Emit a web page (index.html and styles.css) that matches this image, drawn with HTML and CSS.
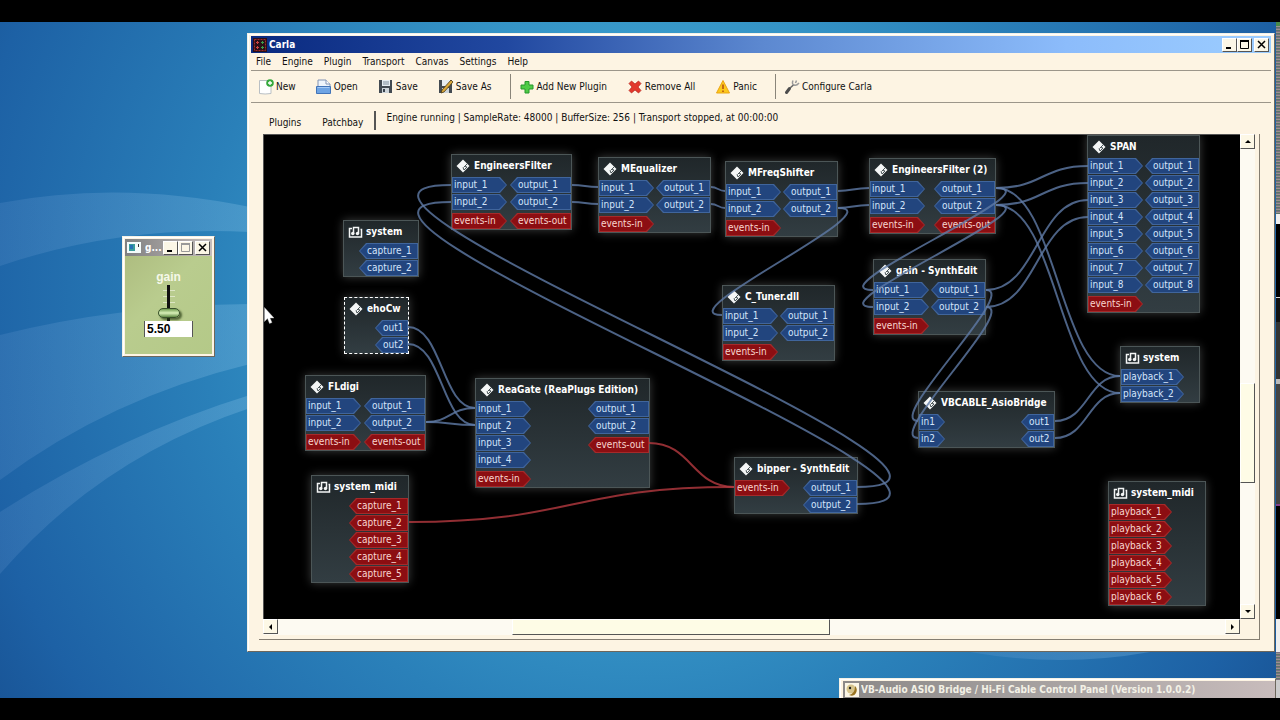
FILE: index.html
```html
<!DOCTYPE html>
<html lang="en">
<head>
<meta charset="utf-8">
<title>Carla</title>
<link rel="stylesheet" href="styles.css">
</head>
<body>
<svg class="sprite" aria-hidden="true">
  <symbol id="plugin" viewBox="0 0 15 14">
    <path d="M7 .5 13.500 7 7 13.500 .5 7z" fill="#f4f6f6"/>
    <path d="M11 5 7.500 8.500M7 8.500 8 11M9 7.500l2 .5M8 11l3-3" fill="none" stroke="#4a5558" stroke-width="1"/>
  </symbol>
  <symbol id="hardware" viewBox="0 0 15 14">
    <path d="M4 3.500H1.500v8.500h12V4.500h-1M5.500 8.500V2.500h5v6" fill="none" stroke="#f4f6f6" stroke-width="1.500"/>
    <circle cx="4.800" cy="8.500" r="1.700" fill="#f4f6f6"/><circle cx="9.500" cy="8.500" r="1.700" fill="#f4f6f6"/>
  </symbol>
  <symbol id="min" viewBox="0 0 10 10"><path d="M1 8h5" stroke="#000" stroke-width="2"/></symbol>
  <symbol id="max" viewBox="0 0 10 10"><path d="M.5 1.500h8v7h-8z" fill="none" stroke="currentColor"/><path d="M0 1h9" stroke="currentColor" stroke-width="2"/></symbol>
  <symbol id="close" viewBox="0 0 10 10"><path d="m1 1 7 7M8 1 1 8" stroke="#000" stroke-width="1.500"/></symbol>
</svg>

<main class="desktop">
  <svg class="wallpaper" viewBox="0 22 1280 676" preserveAspectRatio="none" aria-hidden="true">
    <defs>
      <radialGradient id="sky" gradientUnits="userSpaceOnUse" cx="640" cy="300" r="800">
        <stop offset="0" stop-color="#45acd6"/><stop offset=".3" stop-color="#3a9dcc"/>
        <stop offset=".55" stop-color="#2a80b9"/><stop offset=".85" stop-color="#1d61a5"/><stop offset="1" stop-color="#174f90"/>
      </radialGradient>
      <linearGradient id="ray" x1="0" x2="1"><stop offset="0" stop-color="#8fb4e6" stop-opacity=".14"/><stop offset="1" stop-color="#8fc8ea" stop-opacity=".28"/></linearGradient>
    </defs>
    <path d="M0 22h1280v676H0z" fill="url(#sky)"/>
    <g fill="url(#ray)">
      <path d="M0 203Q120 180 250 207V232Q120 225 0 266z"/>
      <path d="M0 335Q120 305 250 304V364Q110 398 0 480z"/>
      <path d="M0 512Q120 435 250 395V408Q100 458 0 574z"/>
      <path d="M970 652Q1060 668 1150 652z"/>
    </g>
  </svg>

  <div class="edge-strip"></div>

  <section class="window gain-window" aria-label="gain">
    <header class="titlebar inactive">
      <svg class="app-icon" viewBox="0 0 14 14"><path d="M0 1h14v11H0z" fill="#f4fbfa"/><path d="M2 3h6v7H2z" fill="#3a9c9c"/><path d="M3 4h3v4H3z" fill="#2673b5"/><path d="M11 3h1v3h-1z" fill="#333"/></svg>
      <h1>g...</h1>
      <button class="win-btn" aria-label="Minimize"><svg><use href="#min"/></svg></button>
      <button class="win-btn dim" aria-label="Maximize"><svg><use href="#max"/></svg></button>
      <button class="win-btn apart" aria-label="Close"><svg><use href="#close"/></svg></button>
    </header>
    <div class="gain-body">
      <label for="gain-slider">gain</label>
      <input id="gain-slider" class="gain-slider" type="range" min="0" max="10" step="0.5" value="1">
      <input class="gain-value" type="text" value="5.50" aria-label="gain value">
    </div>
  </section>

  <section class="window bridge-window" aria-label="VB-Audio">
    <header class="titlebar bridge">
      <svg class="app-icon" viewBox="0 0 14 14"><path d="M0 0h14v14H0z" fill="#fbf6e6"/><circle cx="6" cy="6" r="4.500" fill="#d6c48c"/><path d="M10 3q3 3 1 7t-7 2q6-1 6-9z" fill="#9a7420"/><circle cx="5" cy="5" r="1.200" fill="#222"/></svg>
      <h1>VB-Audio ASIO Bridge / Hi-Fi Cable Control Panel (Version 1.0.0.2)</h1>
    </header>
  </section>

  <section class="window carla" aria-label="Carla">
    <header class="titlebar active">
      <svg class="app-icon" viewBox="0 0 14 14"><path d="M0 0h14v14H0z" fill="#2a1018"/><path d="M1.500 1.500h11v11h-11z" fill="none" stroke="#a32a2a" stroke-dasharray="2 1"/><path d="M3 4.500h3M3 9.500h3M4.500 3v3M4.500 8v3" stroke="#c44"/><path d="M8 4.500h3M8 9.500h3M9.500 3v3M9.500 8v3" stroke="#3c9c4c"/></svg>
      <h1>Carla</h1>
      <button class="win-btn" aria-label="Minimize"><svg><use href="#min"/></svg></button>
      <button class="win-btn" aria-label="Maximize"><svg><use href="#max"/></svg></button>
      <button class="win-btn apart" aria-label="Close"><svg><use href="#close"/></svg></button>
    </header>
    <nav class="menubar">
      <button>File</button><button>Engine</button><button>Plugin</button><button>Transport</button><button>Canvas</button><button>Settings</button><button>Help</button>
    </nav>
    <div class="toolbar">
      <button><svg viewBox="0 0 16 16"><path d="M1.500 1.500h9.500l2 3v10q-6 1-11.500 0z" fill="#fff" stroke="#b9bfc4"/><circle cx="12" cy="4" r="3.800" fill="#35a83c"/><path d="M12 2v4M10 4h4" stroke="#fff" stroke-width="1.300"/></svg>New</button>
      <button><svg viewBox="0 0 16 16"><path d="M2 1h8l4 4v6H2z" fill="#eef4fb" stroke="#8093b4"/><path d="M10 1v4h4" fill="#fff" stroke="#8093b4"/><path d="M.5 7.500h14v7H.5z" fill="#6ea4e4" stroke="#4274b8"/><path d="M1.500 8.500h12" stroke="#a5c9f4"/></svg>Open</button>
      <button><svg viewBox="0 0 16 16"><path d="M1 1h13v13H1z" fill="#434b52"/><path d="M4 1h8v6H4z" fill="#e6edf2"/><path d="M5 3h6M5 5h6" stroke="#7e8d9a"/><path d="M4 9h7v5H4z" fill="#ced5da"/><path d="M5 10h2v3H5z" fill="#39434c"/></svg>Save</button>
      <button><svg viewBox="0 0 16 16"><path d="M1 1h13v13H1z" fill="#434b52"/><path d="M4 1h8v6H4z" fill="#e6edf2"/><path d="M4 9h7v5H4z" fill="#ced5da"/><path d="m13 1 2 2L6 13l-3 1 1-3z" fill="#d9a83a" stroke="#4a3a18" stroke-width=".8"/></svg>Save As</button>
      <span class="sep"></span>
      <button><svg viewBox="0 0 16 16"><path d="M6 2.500h4V6h4v4h-4v4H6v-4H2V6h4z" fill="#4fcb46" stroke="#27962d"/></svg>Add New Plugin</button>
      <button><svg viewBox="0 0 16 16"><path d="m4.500 2 3.500 3 3.500-3L14 4.500 11 8l3 3.500-2.500 2.500L8 11l-3.500 3L2 11.500 5 8 2 4.500z" fill="#e2382c" stroke="#b5241d" stroke-width=".7"/></svg>Remove All</button>
      <button><svg viewBox="0 0 16 16"><path d="m8 1.500 6.500 12.500h-13z" fill="#fcc81c" stroke="#eca514" stroke-linejoin="round"/><path d="M8 5.500v4.500M8 11.500v1.500" stroke="#b04a12" stroke-width="1.500"/></svg>Panic</button>
      <span class="sep"></span>
      <button><svg viewBox="0 0 16 16"><path d="m2.500 13.500 3-4" stroke="#4d4d4d" stroke-width="3" stroke-linecap="round"/><path d="m6 9 4-3.500" stroke="#666" stroke-width="1.600"/><path d="M9 1.500Q7.500 5 10 6t5-2M12.500 1.500l-1 2.500" fill="none" stroke="#999" stroke-width="1.500"/></svg>Configure Carla</button>
    </div>

    <div class="workspace">
      <div class="tabrow">
        <div class="tabs" role="tablist">
          <button role="tab" aria-selected="false">Plugins</button>
          <button role="tab" aria-selected="true" class="selected">Patchbay</button>
        </div>
        <p class="status">Engine running | SampleRate: 48000 | BufferSize: 256 | Transport stopped, at 00:00:00</p>
      </div>

      <div class="pane">
        <div class="canvas">
          <section class="node n-filter"><h2><svg><use href="#plugin"/></svg>EngineersFilter</h2><div class="ports"><ul class="in"><li>input_1</li><li>input_2</li><li class="midi">events-in</li></ul><ul class="out wide"><li>output_1</li><li>output_2</li><li class="midi">events-out</li></ul></div></section>
          <section class="node n-equalizer"><h2><svg><use href="#plugin"/></svg>MEqualizer</h2><div class="ports"><ul class="in"><li>input_1</li><li>input_2</li><li class="midi">events-in</li></ul><ul class="out"><li>output_1</li><li>output_2</li></ul></div></section>
          <section class="node n-shifter"><h2><svg><use href="#plugin"/></svg>MFreqShifter</h2><div class="ports"><ul class="in"><li>input_1</li><li>input_2</li><li class="midi">events-in</li></ul><ul class="out"><li>output_1</li><li>output_2</li></ul></div></section>
          <section class="node n-filter2"><h2><svg><use href="#plugin"/></svg>EngineersFilter (2)</h2><div class="ports"><ul class="in"><li>input_1</li><li>input_2</li><li class="midi">events-in</li></ul><ul class="out wide"><li>output_1</li><li>output_2</li><li class="midi">events-out</li></ul></div></section>
          <section class="node n-span"><h2><svg><use href="#plugin"/></svg>SPAN</h2><div class="ports"><ul class="in"><li>input_1</li><li>input_2</li><li>input_3</li><li>input_4</li><li>input_5</li><li>input_6</li><li>input_7</li><li>input_8</li><li class="midi">events-in</li></ul><ul class="out"><li>output_1</li><li>output_2</li><li>output_3</li><li>output_4</li><li>output_5</li><li>output_6</li><li>output_7</li><li>output_8</li></ul></div></section>
          <section class="node n-capture"><h2><svg><use href="#hardware"/></svg>system</h2><div class="ports"><ul class="out capture"><li>capture_1</li><li>capture_2</li></ul></div></section>
          <section class="node n-ehocw picked"><h2><svg><use href="#plugin"/></svg>ehoCw</h2><div class="ports"><ul class="out short"><li>out1</li><li>out2</li></ul></div></section>
          <section class="node n-fldigi"><h2><svg><use href="#plugin"/></svg>FLdigi</h2><div class="ports"><ul class="in"><li>input_1</li><li>input_2</li><li class="midi">events-in</li></ul><ul class="out wide"><li>output_1</li><li>output_2</li><li class="midi">events-out</li></ul></div></section>
          <section class="node n-reagate"><h2><svg><use href="#plugin"/></svg>ReaGate (ReaPlugs Edition)</h2><div class="ports"><ul class="in"><li>input_1</li><li>input_2</li><li>input_3</li><li>input_4</li><li class="midi">events-in</li></ul><ul class="out wide"><li>output_1</li><li>output_2</li><li class="midi">events-out</li></ul></div></section>
          <section class="node n-midi-in"><h2><svg><use href="#hardware"/></svg>system_midi</h2><div class="ports"><ul class="out capture"><li class="midi">capture_1</li><li class="midi">capture_2</li><li class="midi">capture_3</li><li class="midi">capture_4</li><li class="midi">capture_5</li></ul></div></section>
          <section class="node n-tuner"><h2><svg><use href="#plugin"/></svg>C_Tuner.dll</h2><div class="ports"><ul class="in"><li>input_1</li><li>input_2</li><li class="midi">events-in</li></ul><ul class="out"><li>output_1</li><li>output_2</li></ul></div></section>
          <section class="node n-gain"><h2><svg><use href="#plugin"/></svg>gain - SynthEdit</h2><div class="ports"><ul class="in"><li>input_1</li><li>input_2</li><li class="midi">events-in</li></ul><ul class="out"><li>output_1</li><li>output_2</li></ul></div></section>
          <section class="node n-bipper"><h2><svg><use href="#plugin"/></svg>bipper - SynthEdit</h2><div class="ports"><ul class="in"><li class="midi">events-in</li></ul><ul class="out"><li>output_1</li><li>output_2</li></ul></div></section>
          <section class="node n-bridge"><h2><svg><use href="#plugin"/></svg>VBCABLE_AsioBridge</h2><div class="ports"><ul class="in short"><li>in1</li><li>in2</li></ul><ul class="out short"><li>out1</li><li>out2</li></ul></div></section>
          <section class="node n-playback"><h2><svg><use href="#hardware"/></svg>system</h2><div class="ports"><ul class="in playback"><li>playback_1</li><li>playback_2</li></ul></div></section>
          <section class="node n-midi-out"><h2><svg><use href="#hardware"/></svg>system_midi</h2><div class="ports"><ul class="in playback"><li class="midi">playback_1</li><li class="midi">playback_2</li><li class="midi">playback_3</li><li class="midi">playback_4</li><li class="midi">playback_5</li><li class="midi">playback_6</li></ul></div></section>

          <svg class="wires" aria-hidden="true">
            <g transform="translate(-264 -135)">
              <path d="M857 487C1060 487 248 185 451 185"/>
              <path d="M857 504C1060 504 248 202 451 202"/>
              <path d="M572 185C585 185 585 187 598 187"/>
              <path d="M572 202C585 202 585 204 598 204"/>
              <path d="M711 187C718 187 718 191 725 191"/>
              <path d="M711 204C718 204 718 208 725 208"/>
              <path d="M838 191C853 191 853 188 869 188"/>
              <path d="M838 208C853 208 853 205 869 205"/>
              <path d="M838 208C896 208 664 315 722 315"/>
              <path d="M996 188C1057 188 812 290 873 290"/>
              <path d="M996 205C1057 205 812 307 873 307"/>
              <path d="M996 188C1042 188 1042 166 1088 166"/>
              <path d="M996 205C1042 205 1042 183 1088 183"/>
              <path d="M996 188C1058 188 1058 376 1120 376"/>
              <path d="M996 205C1058 205 1058 393 1120 393"/>
              <path d="M986 290C1037 290 1037 200 1088 200"/>
              <path d="M986 307C1037 307 1037 217 1088 217"/>
              <path d="M986 290C1020 290 884 421 918 421"/>
              <path d="M986 307C1020 307 884 438 918 438"/>
              <path d="M1055 421C1088 421 1088 376 1120 376"/>
              <path d="M1055 438C1088 438 1088 393 1120 393"/>
              <path d="M408 327C442 327 442 408 475 408"/>
              <path d="M408 344C442 344 442 425 475 425"/>
              <path d="M426 422C450 422 450 408 475 408"/>
              <path d="M426 422C450 422 450 425 475 425"/>
              <path class="midi" d="M649 443C692 443 692 487 734 487"/>
              <path class="midi" d="M409 522C572 522 572 487 734 487"/>
            </g>
          </svg>
        </div>
        <div class="vscroll">
          <button class="scroll-btn up" aria-label="Scroll up"></button>
          <span class="thumb"></span>
          <button class="scroll-btn down" aria-label="Scroll down"></button>
        </div>
        <div class="hscroll">
          <button class="scroll-btn left" aria-label="Scroll left"></button>
          <span class="thumb"></span>
          <button class="scroll-btn right" aria-label="Scroll right"></button>
        </div>
      </div>
    </div>
  </section>

  <svg class="cursor" viewBox="0 0 10 17" aria-hidden="true"><path d="M.5.5v14l3-3 2 5 2.500-1-2-4.500h4z" fill="#fff" stroke="#bbb" stroke-width=".4"/></svg>
</main>
</body>
</html>
```
FILE: styles.css
```css
* { box-sizing: border-box; }

body {
  margin: 0;
  height: 100vh;
  padding: 22px 0;
  background: #000;
  color: #111;
  font: 10px/14px "DejaVu Sans Condensed", "DejaVu Sans", sans-serif;
  overflow: hidden;
}

h1, h2, p, ul { margin: 0; padding: 0; font-size: inherit; }
ul { list-style: none; }
button, input { font: inherit; color: inherit; }
button { border: 0; padding: 0; background: none; }

.sprite { position: absolute; width: 0; height: 0; }

.desktop { position: relative; height: 100%; overflow: hidden; }
.wallpaper { display: block; width: 100%; height: 100%; }

.edge-strip {
  position: absolute;
  top: 0;
  right: 0;
  bottom: 0;
  width: 4px;
  background:
    linear-gradient(#4a8a4a 4px, transparent 4px 192px, #f0f0f0 192px 202px, #000 202px 275px, #ddd 275px 276px, #111 276px 300px, #333 300px 357px, #bbb 357px 362px, #444 362px 482px, #85408a 482px 484px, #000 484px 597px, #eee 597px 630px, transparent 630px 658px, #ccc 658px),
    repeating-linear-gradient(#7b6f80 0 1px, #9a938e 1px 2px, #5d7468 2px 3px);
}

/* Window frames */
.window {
  position: absolute;
  display: flex;
  flex-direction: column;
  padding: 3px;
  background: #fdf4e3;
  border: 1px solid #f4f1e6;
  border-right-color: #6d675c;
  border-bottom-color: #6d675c;
  box-shadow: inset 1px 1px #fff;
}
.carla { left: 247px; right: 5px; top: 11px; bottom: 46px; padding: 2px 3px 3px; }
.gain-window { left: 122px; top: 214px; width: 93px; height: 121px; padding: 2px; }
.bridge-window { left: 839px; right: 4px; bottom: 0; padding: 2px 0 0 3px; border-bottom: 0; }

.titlebar {
  display: flex;
  align-items: center;
  height: 17px;
  padding-right: 2px;
  color: #fff;
  flex: none;
}
.titlebar h1 { flex: 1; font-weight: bold; white-space: nowrap; overflow: hidden; }
.active { background: linear-gradient(90deg, #0a2a80, #2148a0 25%, #5c88d0 50%, #8cbcfb 80%, #9ccdff); }
.inactive { background: linear-gradient(90deg, #808080, #c4bcbc); }
.bridge { background: linear-gradient(90deg, #8c8988, #a8a3a2 50%, #c8bcbc); color: #f3f1e6; }
.app-icon { width: 14px; height: 14px; margin: 0 2px; flex: none; }
.gain-window .app-icon { margin-right: 4px; }

.win-btn {
  display: grid;
  place-items: center;
  width: 15px;
  height: 14px;
  background: #fbf6e6;
  border: 1px solid #fff;
  border-right-color: #555;
  border-bottom-color: #555;
  color: #000;
}
.win-btn svg { width: 10px; height: 10px; }
.apart { margin-left: 2px; }
.dim { color: #999; }

/* Menu and toolbar */
.menubar {
  display: flex;
  align-items: flex-end;
  gap: 11px;
  height: 18px;
  padding: 0 5px 1px;
  border-bottom: 1px solid #9c968a;
}
.toolbar {
  display: flex;
  align-items: center;
  gap: 20px;
  height: 32px;
  padding: 0 7px;
  border-bottom: 1px solid #9c968a;
}
.toolbar button { display: flex; align-items: center; gap: 2px; white-space: nowrap; }
.toolbar svg { width: 16px; height: 16px; }
.sep { width: 1px; height: 25px; margin: 0 -12px 0 -2px; background: #8a857a; }

.workspace {
  flex: 1;
  display: flex;
  flex-direction: column;
  min-height: 0;
  margin: 8px 11px 8px 8px;
}
.tabrow { display: flex; gap: 10px; height: 23px; }
.tabs { display: flex; align-items: flex-end; border-right: 2px solid #555; height: 19px; }
.tabs button { padding: 0 10px; }
.tabs button.selected { padding: 0 11px; }
.status { white-space: nowrap; }

.pane {
  flex: 1;
  min-height: 0;
  display: grid;
  grid-template: 1fr 16px / 1fr 15px;
  padding: 0 4px 4px 4px;
  border-right: 1px solid #857e72;
  border-bottom: 1px solid #857e72;
}
.canvas {
  position: relative;
  overflow: hidden;
  background: #000;
  border: 1px solid #555;
  border-width: 1px 0 0 1px;
}
.wires { position: absolute; left: 0; top: 0; width: 100%; height: 100%; fill: none; stroke: #5f7aa6; stroke-width: 2; stroke-opacity: .8; }
.wires .midi { stroke: #b53a40; }

/* Patchbay nodes */
.node {
  position: absolute;
  background: linear-gradient(#20272a, #323d42);
  border: 1px solid #4c5657;
  box-shadow: 0 0 9px rgba(150, 155, 155, .4);
  color: #fff;
}
.node h2 {
  display: flex;
  align-items: center;
  gap: 3px;
  height: 22px;
  padding-left: 4px;
  white-space: nowrap;
}
.node h2 svg { width: 15px; height: 14px; flex: none; }
.picked { border: 1px dashed #fff; }

.ports { display: flex; justify-content: space-between; }
.out { margin-left: auto; width: 54px; }
.in { width: 55px; }
.out.wide { width: 61px; }
.out.capture { width: 59px; }
.in.playback { width: 63px; }
.in.short { width: 26px; }
.out.short { width: 33px; }

.ports li {
  position: relative;
  z-index: 0;
  height: 16px;
  margin-bottom: 1px;
  line-height: 15px;
  color: #d3e4fb;
  background: #40659c;
  white-space: nowrap;
}
.ports li:last-child { margin-bottom: 0; }
.ports li::before {
  content: "";
  position: absolute;
  inset: 1px;
  z-index: -1;
  background: #22457e;
}
.in li { padding-left: 2px; }
.out li { padding-left: 8px; }
.in li, .in li::before { clip-path: polygon(0 0, calc(100% - 7px) 0, 100% 50%, calc(100% - 7px) 100%, 0 100%); }
.out li, .out li::before { clip-path: polygon(7px 0, 100% 0, 100% 100%, 7px 100%, 0 50%); }
.ports li.midi { background: #a52a2a; color: #f8d6d0; }
.ports li.midi::before { background: #8c0e12; }
.ports li:not(.midi) + .midi { margin-top: 3px; }

/* Node places on the patchbay */
.n-filter { left: 187px; top: 19px; width: 121px; }
.n-equalizer { left: 334px; top: 22px; width: 113px; }
.n-shifter { left: 461px; top: 26px; width: 113px; }
.n-filter2 { left: 605px; top: 23px; width: 127px; }
.n-span { left: 823px; top: 0; width: 113px; }
.n-capture { left: 79px; top: 85px; width: 76px; }
.n-ehocw { left: 80px; top: 162px; width: 65px; }
.n-fldigi { left: 41px; top: 240px; width: 121px; }
.n-reagate { left: 211px; top: 243px; width: 175px; }
.n-midi-in { left: 47px; top: 340px; width: 98px; }
.n-tuner { left: 458px; top: 150px; width: 113px; }
.n-gain { left: 609px; top: 124px; width: 113px; }
.n-bipper { left: 470px; top: 322px; width: 124px; }
.n-bridge { left: 654px; top: 256px; width: 137px; }
.n-playback { left: 856px; top: 211px; width: 80px; }
.n-midi-out { left: 844px; top: 346px; width: 98px; }

/* Scroll bars */
.vscroll, .hscroll { display: flex; background: #fdfaf2; }
.vscroll { flex-direction: column; }
.scroll-btn {
  display: grid;
  place-items: center;
  width: 15px;
  height: 15px;
  flex: none;
  background: #fdf8e6;
  border: 1px solid #fff;
  border-right-color: #555;
  border-bottom-color: #555;
}
.scroll-btn::before { content: ""; border: 3px solid transparent; }
.up::before { border-top: 0; border-bottom-color: #000; }
.down::before { border-bottom: 0; border-top-color: #000; }
.left::before { border-left: 0; border-right-color: #000; }
.right::before { border-right: 0; border-left-color: #000; }
.thumb { background: #fefce6; border: 1px solid #fff; border-right-color: #555; border-bottom-color: #555; }
.vscroll { justify-content: space-between; }
.vscroll .thumb { flex: 98 0 0; }
.vscroll::before, .vscroll::after { content: ""; }
.vscroll .up { order: -2; }
.vscroll::before { order: -1; flex: 235 0 0; }
.vscroll::after { order: 1; flex: 122 0 0; }
.vscroll .down { order: 2; }
.hscroll .thumb { width: 324px; width: 32.5%; margin-left: 24%; margin-right: auto; }

/* Gain window */
.gain-body {
  flex: 1;
  display: flex;
  flex-direction: column;
  align-items: center;
  padding-top: 14px;
  background: linear-gradient(135deg, #aebd80, #b9cc8e 40%, #b4c988);
  font: bold 12px/15px "Liberation Sans", sans-serif;
}
.gain-body label { color: #f5f8e8; }
.gain-slider {
  appearance: none;
  writing-mode: vertical-lr;
  direction: rtl;
  width: 24px;
  height: 36px;
  margin: 0;
  background:
    linear-gradient(#111, #111) center / 3px 100% no-repeat,
    repeating-linear-gradient(transparent 0 5px, #dde6c4 5px 6px) center top / 12px 24px no-repeat;
}
.gain-slider::-webkit-slider-thumb {
  appearance: none;
  width: 22px;
  height: 10px;
  border: 1px solid #38502a;
  border-radius: 5px;
  background: linear-gradient(#6f9a50, #d8f0b8 50%, #5f8a44);
  box-shadow: 2px 2px 2px rgba(40, 60, 20, .7);
}
.gain-value {
  width: 49px;
  height: 16px;
  padding: 0 2px;
  border: solid #555;
  border-width: 0 1px;
  background: #fff;
  color: #000;
}

.cursor { position: absolute; left: 264px; top: 285px; width: 10px; height: 17px; }
```
